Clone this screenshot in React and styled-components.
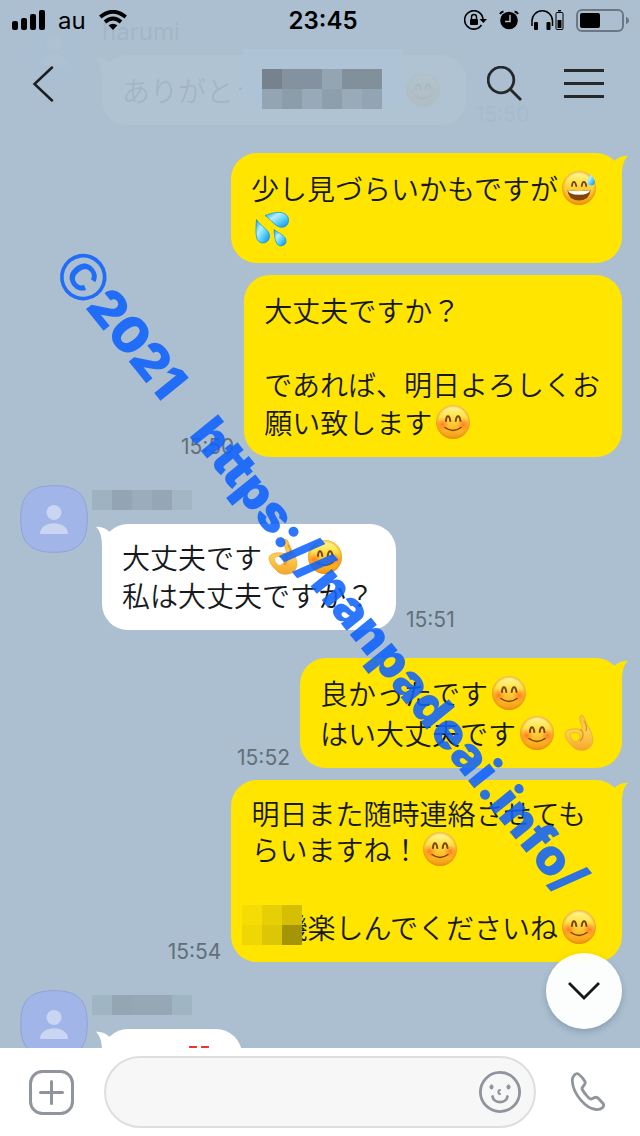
import React from "react";
import styled, { createGlobalStyle, css } from "styled-components";

const GlobalStyle = createGlobalStyle`
  * {
    box-sizing: border-box;
  }

  body {
    margin: 0;
    background: #abbfd0;
    color: #16191c;
    font-family: "Inter", "Noto Sans CJK JP", sans-serif;
  }

  svg {
    display: block;
  }
`;

const Screen = styled.div`
  position: relative;
  display: flex;
  flex-direction: column;
  height: 100vh;
  overflow: hidden;
`;

const IconButton = styled.button`
  display: flex;
  align-items: center;
  justify-content: center;
  padding: 0;
  border: 0;
  background: none;
  cursor: pointer;
`;

/* header */

const Header = styled.header`
  position: absolute;
  z-index: 2;
  top: 0;
  left: 0;
  right: 0;
  background: rgba(171, 191, 208, 0.94);
`;

const StatusBar = styled.div`
  display: grid;
  grid-template-columns: 1fr auto 1fr;
  align-items: center;
  height: 40px;
  padding: 0 11px 0 12px;
  color: #000000;
`;

const StatusGroup = styled.div`
  display: flex;
  align-items: center;
  justify-content: ${ props => props.$end ? "flex-end" : "flex-start" };
  gap: ${ props => props.$end ? "12px" : "13px" };
  font-size: 24px;
`;

const Clock = styled.time`
  padding-left: 5px;
  font-size: 24px;
  font-weight: 600;
`;

const NavBar = styled.nav`
  display: grid;
  grid-template-columns: 1fr auto 1fr;
  align-items: center;
  height: 88px;
  padding: 0 28px 0 32px;
`;

const NavActions = styled.div`
  display: flex;
  justify-content: flex-end;
  gap: 41px;
`;

const Title = styled.h1`
  margin: 0 0 10px;
  padding: 20px 20px 0;
  background: #aec3d5;
`;

const Mosaic = styled.span`
  display: grid;
  grid-template-columns: repeat(${ props => props.$columns }, 20px);
  grid-auto-rows: 20px;
  width: max-content;
`;

const Cell = styled.span`
  background: ${ props => props.$color };
`;

/* messages */

const Chat = styled.main`
  position: relative;
  display: flex;
  flex: 1;
  flex-direction: column;
  gap: 28px;
  min-height: 0;
  padding: 16px 18px 0 20px;
  overflow: hidden;

  & > * {
    flex-shrink: 0;
  }
`;

const Group = styled.section`
  display: flex;
  flex-direction: column;
  gap: 12px;
`;

const Received = styled.section`
  display: flex;
  align-items: flex-start;
  gap: 14px;
`;

const Name = styled.div`
  height: 39px;
  font-size: 24px;
  line-height: 32px;

  ${ Mosaic } {
    margin: 0 -10px;
    padding-top: 5px;
  }
`;

const Row = styled.div`
  display: flex;
  flex-direction: ${ props => props.$mine ? "row-reverse" : "row" };
  align-items: flex-end;
  gap: 10px;
`;

const Bubble = styled.div`
  position: relative;
  padding: 15px 22px 15px 20px;
  border-radius: 26px;
  background: ${ props => props.$mine ? "#ffe500" : "#ffffff" };
  color: #16191c;
  font-family: "Noto Sans CJK JP", sans-serif;
  font-size: 28px;
  font-weight: 350;
`;

const Tail = styled.svg`
  position: absolute;
  top: 2px;
  ${ props => props.$mine ? css`
    right: -6px;
    transform: scaleX(-1);
    fill: #ffe500;
  ` : css`
    left: -6px;
    fill: #ffffff;
  ` }
`;

const Line = styled.p`
  position: relative;
  display: flex;
  align-items: center;
  height: ${ props => props.$tall ? "40px" : "36px" };
  margin: 0;
  line-height: 36px;
  white-space: pre;

  ${ Mosaic } {
    position: absolute;
    left: -9px;
    top: -2px;
  }
`;

const EmojiBox = styled.svg`
  flex: none;
  width: 34px;
  height: 34px;
  margin: 0 4px;
  overflow: visible;
`;

const Stamp = styled.time`
  color: #626f79;
  font-size: 21px;
  line-height: 20px;
`;

const ScrollButton = styled(IconButton)`
  position: absolute;
  right: 18px;
  bottom: 19px;
  width: 76px;
  height: 76px;
  border-radius: 50%;
  background: rgba(255, 255, 255, 0.96);
  box-shadow: 0 3px 6px rgba(40, 60, 80, 0.25);
`;

const Watermark = styled.div`
  position: absolute;
  z-index: 3;
  top: 226px;
  left: 68px;
  display: flex;
  align-items: center;
  color: #0e62ff;
  opacity: 0.87;
  font-family: "Inter", sans-serif;
  font-size: 50px;
  font-weight: 900;
  line-height: 64px;
  white-space: nowrap;
  pointer-events: none;
  transform: rotate(51deg);
  transform-origin: left center;
`;

const Copyright = styled.span`
  font-family: "Liberation Sans", sans-serif;
  font-size: 66px;
  font-weight: 700;
`;

const Year = styled.span`
  margin-right: 42px;
`;

/* composer */

const Composer = styled.form`
  display: flex;
  flex: none;
  align-items: center;
  gap: 30px;
  height: 88px;
  padding: 0 32px 0 29px;
  background: #ffffff;
`;

const Field = styled.div`
  display: flex;
  flex: 1;
  align-items: center;
  height: 72px;
  padding: 0 13px 0 30px;
  border: 2px solid #dedede;
  border-radius: 36px;
  background: #f7f7f7;
`;

const TextInput = styled.input`
  flex: 1;
  min-width: 0;
  border: 0;
  outline: 0;
  background: none;
  font-family: "Noto Sans CJK JP", sans-serif;
  font-size: 28px;
`;

const titleCells = [
  "#76838e", "#84929f", "#84929f", "#93a5b2", "#82909b", "#82909b",
  "#93a5b2", "#8c9ca9", "#98aab8", "#8e9fab", "#99abb9", "#93a5b2",
];
const nameCells = [ "#9fb2c0", "#93a5b3", "#9badba", "#95a7b5", "#a2b6c4" ];
const lastNameCells = [ "#a0b5c3", "#94a6b4", "#96a8b6", "#96a8b6", "#a0b5c4" ];
const hiddenCells = [ "#f5dc04", "#e6cf04", "#d4bf05", "#efd704", "#dcc605", "#a39408" ];

function Pixels( { colors, columns } ) {
  return (
    <Mosaic $columns={ columns } aria-hidden="true">
      { colors.map( ( color, i ) => <Cell key={ i } $color={ color } /> ) }
    </Mosaic>
  );
}

const Defs = styled.svg`
  position: absolute;
`;

function Gradients() {
  return (
    <Defs width="0" height="0" aria-hidden="true">
      <defs>
        <linearGradient id="face" x1="0" y1="0" x2="0" y2="1">
          <stop offset="0" stopColor="#fffa9c" />
          <stop offset="0.35" stopColor="#ffe24a" />
          <stop offset="0.75" stopColor="#fdb322" />
          <stop offset="1" stopColor="#f09a14" />
        </linearGradient>
        <radialGradient id="rim">
          <stop offset="0.82" stopColor="#e98a08" stopOpacity="0" />
          <stop offset="1" stopColor="#e58208" stopOpacity="0.6" />
        </radialGradient>
        <radialGradient id="blush">
          <stop offset="0" stopColor="#ff6a1f" stopOpacity="0.8" />
          <stop offset="1" stopColor="#ff7a1f" stopOpacity="0" />
        </radialGradient>
        <linearGradient id="skin" x1="0" y1="0" x2="0" y2="1">
          <stop offset="0" stopColor="#f7c03c" />
          <stop offset="0.5" stopColor="#ffce50" />
          <stop offset="1" stopColor="#f3a62c" />
        </linearGradient>
        <linearGradient id="water" x1="0" y1="0" x2="1" y2="1">
          <stop offset="0" stopColor="#0d9cf0" />
          <stop offset="0.35" stopColor="#b4efff" />
          <stop offset="0.65" stopColor="#4fcbfc" />
          <stop offset="1" stopColor="#0786e8" />
        </linearGradient>
      </defs>
    </Defs>
  );
}

function Smile() {
  return (
    <EmojiBox viewBox="0 0 34 34" role="img" aria-label="😊">
      <circle cx="17" cy="17" r="17" fill="url(#face)" />
      <circle cx="17" cy="17" r="17" fill="url(#rim)" />
      <circle cx="6.5" cy="19.5" r="7" fill="url(#blush)" />
      <circle cx="27.5" cy="19.5" r="7" fill="url(#blush)" />
      <g fill="none" stroke="#7b4305" strokeLinecap="round">
        <path d="M10 16C10.300 9.500 13.500 9.500 14.300 16M19.700 16C20.500 9.500 23.700 9.500 24.500 16" strokeWidth="2" />
        <path d="M9 22.500Q17 28.500 25 22.500" strokeWidth="1.500" />
      </g>
    </EmojiBox>
  );
}

function Sweat() {
  return (
    <EmojiBox viewBox="0 0 34 34" role="img" aria-label="😅">
      <circle cx="17" cy="17" r="17" fill="url(#face)" />
      <circle cx="17" cy="17" r="17" fill="url(#rim)" />
      <path d="M10 15C10.500 9.500 13 9.500 14.300 15M19.700 15C20.500 9.500 23.300 9.500 24.300 15" fill="none" stroke="#7b4305" strokeWidth="1.800" strokeLinecap="round" />
      <path d="M5.500 19Q17 21 28.500 19Q28 29 17 29.500Q6 29 5.500 19Z" fill="#804507" />
      <path d="M6 19.200Q17 21 28 19.200Q27.500 23.500 17 23.700Q6.500 23.500 6 19.200Z" fill="#ffffff" />
      <path d="M29.500 2.500C27 7 24.500 9.300 25 12A4.300 4.300 0 0 0 33 11.500C33 9 30.500 6 29.500 2.500Z" fill="url(#water)" />
    </EmojiBox>
  );
}

function Drops() {
  return (
    <EmojiBox viewBox="0 0 34 34" role="img" aria-label="💦">
      <g fill="url(#water)" stroke="#0a8eea" strokeWidth="0.7">
        <path d="M10 4.500C17 2 24 0 29 2.500A7.300 7.300 0 0 1 29 16C21 18 17 9 10 4.500Z" />
        <path d="M1.500 8.500C5 15 15 19 14.500 25A6.500 6.500 0 0 1 1.500 26C.5 21 1 14 1.500 8.500Z" />
        <path d="M19 18.500C23 22 31 24.500 31 29.500A5 5 0 0 1 21.500 32C19.500 28 19.500 23 19 18.500Z" />
      </g>
    </EmojiBox>
  );
}

function Okay() {
  return (
    <EmojiBox viewBox="0 0 34 34" role="img" aria-label="👌">
      <path
        d="M3 18C3.500 13 12 12 18 13.500C20.500 13.500 21 12 19.500 9C18 5.500 17 1 18.500 -.5C20.500 -2 22 1 23 4C25 9 27.500 12 29 16C31 21 32 26 29 30C26 35 15 36 11 31C7 27 3 23 3 18ZM8 18C8.500 22 11 25 13.500 25.500C17 25 19 21.500 18 18.500C15 16 11 16 8 18Z"
        fill="url(#skin)"
        fillRule="evenodd"
        stroke="#eda333"
        strokeWidth="0.7"
      />
      <path d="M18 13.500C22 15 22 22 18 25M22 5C25 9 25 12 24 15" fill="none" stroke="#dc9028" strokeWidth="1.200" />
    </EmojiBox>
  );
}

function Bangs() {
  return (
    <EmojiBox viewBox="0 0 34 34" role="img" aria-label="‼️">
      <path d="M7 -1H15L13.500 22H8.500ZM19 -1H27L25.500 22H20.500Z" fill="#e8362f" />
      <circle cx="11" cy="29" r="3.500" fill="#e8362f" />
      <circle cx="23" cy="29" r="3.500" fill="#e8362f" />
    </EmojiBox>
  );
}

function Avatar() {
  return (
    <svg width="68" height="68" viewBox="0 0 68 68" role="img" aria-label="プロフィール">
      <path d="M34 .7C58 .7 67.300 10 67.300 34S58 67.300 34 67.300S.7 58 .7 34S10 .7 34 .7Z" fill="#a1b5e8" stroke="#8fa3d6" />
      <circle cx="34" cy="27.500" r="7.500" fill="#cad5f1" />
      <path d="M20 49C20 34.500 48 34.500 48 49Z" fill="#cad5f1" />
    </svg>
  );
}

function Message( { mine, tail, time, children } ) {
  return (
    <Row $mine={ mine }>
      <Bubble $mine={ mine }>
        { tail && (
          <Tail $mine={ mine } width="22" height="22" viewBox="0 0 22 22" aria-hidden="true">
            <path d="M0 .8C6 .3 10 2.500 13.500 6L20 20L6 22C6 12 5 6 0 .8Z" />
          </Tail>
        ) }
        { children }
      </Bubble>
      { time && <Stamp>{ time }</Stamp> }
    </Row>
  );
}

function SignalIcon() {
  return (
    <svg width="33" height="20" viewBox="0 0 33 20" aria-hidden="true">
      <rect x="0" y="11" width="6" height="9" rx="2" />
      <rect x="9" y="8" width="6" height="12" rx="2" />
      <rect x="18" y="4" width="6" height="16" rx="2" />
      <rect x="27" y="0" width="6" height="20" rx="2" />
    </svg>
  );
}

function WifiIcon() {
  return (
    <svg width="28" height="20" viewBox="0 0 28 20" aria-hidden="true">
      <path d="M1.300 7Q14 -3.500 26.700 7M6 12Q14 5 22 12" fill="none" stroke="#000" strokeWidth="3.800" />
      <path d="M9.500 15.300Q14 12 18.500 15.300L14 20Z" />
    </svg>
  );
}

function LockIcon() {
  return (
    <svg width="23" height="20" viewBox="0 0 23 20" aria-hidden="true">
      <path d="M19 9A9.200 9.200 0 1 0 17.500 15" fill="none" stroke="#000" strokeWidth="1.600" />
      <path d="M15.500 9H23L19.300 13Z" />
      <rect x="6" y="9" width="8" height="6" rx="1" />
      <path d="M7.500 9V7A2.500 2.500 0 0 1 12.500 7V9" fill="none" stroke="#000" strokeWidth="1.400" />
    </svg>
  );
}

function AlarmIcon() {
  return (
    <svg width="20" height="20" viewBox="0 0 20 20" aria-hidden="true">
      <circle cx="10" cy="10.500" r="8.800" />
      <path d="M1 4Q2 2 4.500 1.500M19 4Q18 2 15.500 1.500" fill="none" stroke="#000" strokeWidth="2" />
      <path d="M11 5V11.500H6" fill="none" stroke="#abbfd0" strokeWidth="1.500" />
    </svg>
  );
}

function HeadphonesIcon() {
  return (
    <svg width="33" height="20" viewBox="0 0 33 20" aria-hidden="true">
      <path d="M1 16V11A10 10 0 0 1 21.500 11V16" fill="none" stroke="#000" strokeWidth="1.500" />
      <rect x="3" y="12" width="4" height="8" rx="1" />
      <rect x="15.500" y="12" width="4" height="8" rx="1" />
      <rect x="25" y="2.500" width="7" height="17" rx="1" fill="none" stroke="#000" />
      <rect x="26.500" y="10" width="4" height="8" />
      <rect x="27" y="0" width="3" height="1.500" />
    </svg>
  );
}

function BatteryIcon() {
  return (
    <svg width="53" height="23" viewBox="0 0 53 23" aria-hidden="true">
      <rect x="1" y="1" width="46" height="21" rx="5" fill="none" stroke="#6b7883" strokeWidth="2" />
      <rect x="4" y="4" width="20" height="15" rx="2" />
      <path d="M50 8Q53 9 53 11.500T50 15Z" fill="#6b7883" />
    </svg>
  );
}

export default function App() {
  return (
    <Screen>
      <GlobalStyle />
      <Gradients />
      <Header>
        <StatusBar>
          <StatusGroup>
            <SignalIcon />
            au
            <WifiIcon />
          </StatusGroup>
          <Clock>23:45</Clock>
          <StatusGroup $end>
            <LockIcon />
            <AlarmIcon />
            <HeadphonesIcon />
            <BatteryIcon />
          </StatusGroup>
        </StatusBar>
        <NavBar>
          <div>
            <IconButton type="button" aria-label="戻る">
              <svg width="22" height="36" viewBox="0 0 22 36" fill="none" stroke="#1c1e20" strokeWidth="2.500" strokeLinecap="round">
                <path d="M20 1.500L2.500 18L20 34.500" />
              </svg>
            </IconButton>
          </div>
          <Title aria-label="トーク">
            <Pixels colors={ titleCells } columns={ 6 } />
          </Title>
          <NavActions>
            <IconButton type="button" aria-label="検索">
              <svg width="36" height="36" viewBox="0 0 36 36" fill="none" stroke="#26292c" strokeWidth="2.800">
                <circle cx="14" cy="14" r="12.800" />
                <path d="M23 23L34 34" />
              </svg>
            </IconButton>
            <IconButton type="button" aria-label="メニュー">
              <svg width="48" height="30" viewBox="0 0 48 30" stroke="#26292c" strokeWidth="3">
                <path d="M0 1.500H40M0 14.500H40M0 27.500H40" />
              </svg>
            </IconButton>
          </NavActions>
        </NavBar>
      </Header>

      <Chat>
        <Received>
          <Avatar />
          <div>
            <Name>harumi</Name>
            <Message tail time="15:50">
              <Line $tall>ありがとうございます<Smile /></Line>
            </Message>
          </div>
        </Received>

        <Group>
          <Message mine tail>
            <Line $tall>少し見づらいかもですが<Sweat /></Line>
            <Line $tall><Drops /></Line>
          </Message>
          <Message mine time="15:50">
            <Line $tall>大丈夫ですか？</Line>
            <Line />
            <Line>であれば、明日よろしくお</Line>
            <Line $tall>願い致します<Smile /></Line>
          </Message>
        </Group>

        <Received>
          <Avatar />
          <div>
            <Name><Pixels colors={ nameCells } columns={ 5 } /></Name>
            <Message tail time="15:51">
              <Line>大丈夫です<Okay /><Smile /></Line>
              <Line $tall>私は大丈夫ですか？</Line>
            </Message>
          </div>
        </Received>

        <Group>
          <Message mine tail time="15:52">
            <Line $tall>良かったです<Smile /></Line>
            <Line $tall>はい大丈夫です<Smile /><Okay /></Line>
          </Message>
          <Message mine tail time="15:54">
            <Line>明日また随時連絡させても</Line>
            <Line>らいますね！<Smile /></Line>
            <Line $tall />
            <Line $tall>
              {"　機楽しんでくださいね"}
              <Smile />
              <Pixels colors={ hiddenCells } columns={ 3 } />
            </Line>
          </Message>
        </Group>

        <Received>
          <Avatar />
          <div>
            <Name><Pixels colors={ lastNameCells } columns={ 5 } /></Name>
            <Message tail>
              <Line $tall>{"　　"}<Bangs /></Line>
            </Message>
          </div>
        </Received>

        <ScrollButton type="button" aria-label="最新のメッセージへ">
          <svg width="32" height="18" viewBox="0 0 32 18" fill="none" stroke="#15181a" strokeWidth="2.800">
            <path d="M1 1L16 16L31 1" />
          </svg>
        </ScrollButton>
      </Chat>

      <Composer>
        <IconButton type="button" aria-label="追加">
          <svg width="45" height="45" viewBox="0 0 45 45" fill="none" stroke="#8f949d" strokeWidth="3" strokeLinecap="round">
            <rect x="1.500" y="1.500" width="42" height="42" rx="12" />
            <path d="M22.500 11.500V33.500M11.500 22.500H33.500" />
          </svg>
        </IconButton>
        <Field>
          <TextInput type="text" aria-label="メッセージを入力" />
          <IconButton type="button" aria-label="スタンプ">
            <svg width="42" height="42" viewBox="0 0 42 42" fill="none" stroke="#8f949d" strokeWidth="2.800" strokeLinecap="round">
              <circle cx="21" cy="21" r="19.600" />
              <path d="M13.500 25.500C15 33 27 33 28.500 25.500" />
              <path d="M21 19C19 19 19 23 21 23" strokeWidth="2.200" />
              <rect x="11" y="14" width="3" height="4" rx="1.500" fill="#8f949d" strokeWidth="1" />
              <rect x="28" y="14" width="3" height="4" rx="1.500" fill="#8f949d" strokeWidth="1" />
            </svg>
          </IconButton>
        </Field>
        <IconButton type="button" aria-label="通話">
          <svg width="42" height="42" viewBox="0 0 42 42" fill="none" stroke="#8f949d" strokeWidth="2.800" strokeLinejoin="round">
            <path d="M13 3.500C10 1 6 5 6.300 10C7 23 20 38 30 38.500C35 39 39.500 35.500 37 32.500L32.500 27.500C29.500 24 27.500 28 24.500 28C22.500 27.500 17.500 21 16 18C15.500 15 20.500 14 19 10.500C17.500 8 15 5 13 3.500Z" />
          </svg>
        </IconButton>
      </Composer>

      <Watermark>
        <Copyright>©</Copyright>
        <Year>2021</Year>
        <span>https://nanpadeai.info/</span>
      </Watermark>
    </Screen>
  );
}
